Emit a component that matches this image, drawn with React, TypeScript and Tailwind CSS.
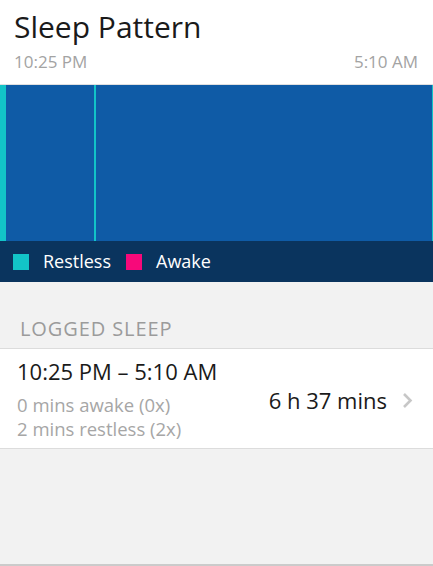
const font = { fontFamily: "'Open Sans', Lato, sans-serif" };

function Chevron() {
  return (
    <svg width="11" height="17" viewBox="0 0 11 17" fill="none" className="text-[#c7c7c7]">
      <path d="M2 2 L8.5 8.5 L2 15" stroke="currentColor" strokeWidth="2.6" />
    </svg>
  );
}

export default function App() {
  return (
    <div className="w-[433px] h-[566px] bg-white flex flex-col overflow-hidden" style={font}>
      <div className="px-[14px] pt-[8px]">
        <h1 className="text-[30px] leading-[38px] text-[#1a1a1a]">Sleep Pattern</h1>
        <div className="flex justify-between text-[17px] leading-[20px] text-[#a3a3a3] mt-[6px] pr-[1px]">
          <span>10:25 PM</span>
          <span>5:10 AM</span>
        </div>
      </div>

      <div className="mt-[12px] border-t border-[#e0e0e0] h-[157px] bg-[#0f5ba6] flex">
        <div className="w-[6px] bg-[#12c4c8]" />
        <div className="w-[88px]" />
        <div className="w-[1.5px] bg-[#12c4c8]" />
        <div className="flex-1" />
        <div className="w-[1px] bg-[#12c4c8]" />
      </div>

      <div className="h-[41px] bg-[#0a345e] flex items-center px-[13px] text-white text-[18px]">
        <div className="w-[16px] h-[16px] bg-[#12c4c8]" />
        <span className="ml-[14px]">Restless</span>
        <div className="w-[16px] h-[16px] bg-[#f7097a] ml-[15px]" />
        <span className="ml-[14px]">Awake</span>
      </div>

      <div className="flex-1 bg-[#f2f2f2] flex flex-col border-b-2 border-[#cbcbcb]">
        <div className="h-[66px] flex items-end pb-[4px] px-[20px] text-[20px] text-[#9b9b9b] tracking-[0.9px]">
          LOGGED SLEEP
        </div>
        <div className="bg-white border-y border-[#dcdcdc] h-[101px] flex items-start pt-[9px] pl-[17px] pr-[20px]">
          <div className="flex-1 flex flex-col">
            <span className="text-[22px] leading-[26px] text-[#1a1a1a]">10:25 PM – 5:10 AM</span>
            <span className="text-[18.5px] leading-[24px] text-[#a6a6a6] mt-[9px]">0 mins awake (0x)</span>
            <span className="text-[18.5px] leading-[24px] text-[#a6a6a6]">2 mins restless (2x)</span>
          </div>
          <div className="self-center flex items-center mb-[6px]">
            <span className="text-[22px] text-[#1a1a1a] mr-[15px]">6 h 37 mins</span>
            <Chevron />
          </div>
        </div>
      </div>
    </div>
  );
}
